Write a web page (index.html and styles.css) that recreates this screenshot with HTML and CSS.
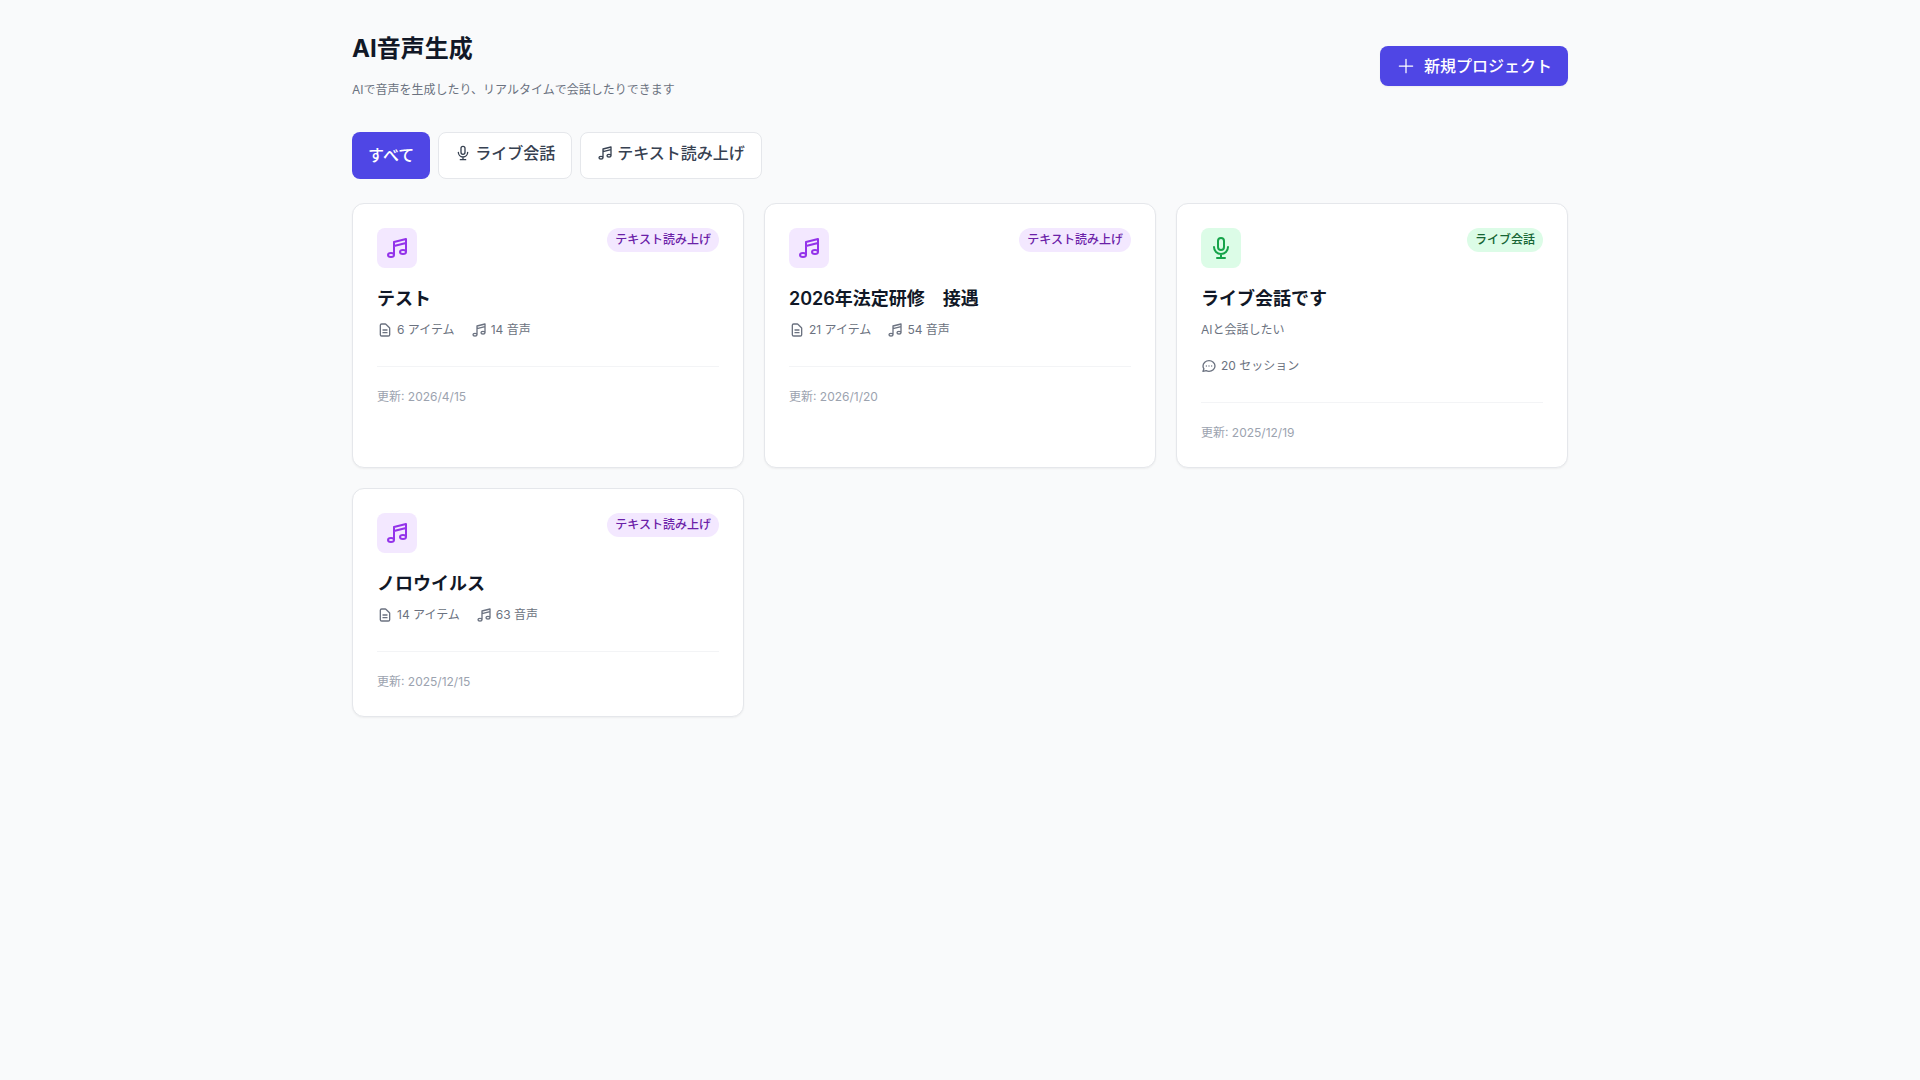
FILE: index.html
```html
<!DOCTYPE html>
<html lang="ja">
<head>
    <meta charset="UTF-8">
    <meta name="viewport" content="width=device-width, initial-scale=1">
    <title>AI音声生成</title>
    <link rel="stylesheet" href="styles.css">
</head>
<body>
    <svg class="sprite" aria-hidden="true">
        <symbol id="icon-plus" viewBox="0 0 24 24">
            <path stroke-width="1.5" d="M12 4v16m8-8H4"/>
        </symbol>
        <symbol id="icon-mic" viewBox="0 0 24 24">
            <path d="M19 11a7 7 0 01-7 7m0 0a7 7 0 01-7-7m7 7v4m0 0H8m4 0h4m-4-8a3 3 0 01-3-3V5a3 3 0 116 0v6a3 3 0 01-3 3z"/>
        </symbol>
        <symbol id="icon-music" viewBox="0 0 24 24">
            <path d="M9 19V6l12-3v13M9 19c0 1.105-1.343 2-3 2s-3-.895-3-2 1.343-2 3-2 3 .895 3 2zm12-3c0 1.105-1.343 2-3 2s-3-.895-3-2 1.343-2 3-2 3 .895 3 2zM9 10l12-3"/>
        </symbol>
        <symbol id="icon-document" viewBox="0 0 24 24">
            <path d="M9 12h6m-6 4h6m2 5H7a2 2 0 01-2-2V5a2 2 0 012-2h5.586a1 1 0 01.707.293l5.414 5.414a1 1 0 01.293.707V19a2 2 0 01-2 2z"/>
        </symbol>
        <symbol id="icon-chat" viewBox="0 0 24 24">
            <path d="M8 12h.01M12 12h.01M16 12h.01M21 12c0 4.418-4.03 8-9 8a9.863 9.863 0 01-4.255-.949L3 20l1.395-3.72C3.512 15.042 3 13.574 3 12c0-4.418 4.03-8 9-8s9 3.582 9 8z"/>
        </symbol>
    </svg>

    <main class="container">
        <header class="page-header">
            <div>
                <h1>AI音声生成</h1>
                <p class="lead">AIで音声を生成したり、リアルタイムで会話したりできます</p>
            </div>
            <button type="button" class="btn-new">
                <svg class="icon-md"><use href="#icon-plus"/></svg>
                新規プロジェクト
            </button>
        </header>

        <div class="filters">
            <button type="button" class="filter active">すべて</button>
            <button type="button" class="filter with-icon">
                <svg class="icon-sm"><use href="#icon-mic"/></svg>
                ライブ会話
            </button>
            <button type="button" class="filter with-icon">
                <svg class="icon-sm"><use href="#icon-music"/></svg>
                テキスト読み上げ
            </button>
        </div>

        <div class="grid">
            <article class="card tts">
                <div class="card-top">
                    <div class="card-icon"><svg class="icon-lg"><use href="#icon-music"/></svg></div>
                    <span class="badge">テキスト読み上げ</span>
                </div>
                <h2>テスト</h2>
                <div class="stats">
                    <span class="stat"><svg class="icon-sm"><use href="#icon-document"/></svg>6 アイテム</span>
                    <span class="stat"><svg class="icon-sm"><use href="#icon-music"/></svg>14 音声</span>
                </div>
                <p class="updated">更新: 2026/4/15</p>
            </article>

            <article class="card tts">
                <div class="card-top">
                    <div class="card-icon"><svg class="icon-lg"><use href="#icon-music"/></svg></div>
                    <span class="badge">テキスト読み上げ</span>
                </div>
                <h2>2026年法定研修　接遇</h2>
                <div class="stats">
                    <span class="stat"><svg class="icon-sm"><use href="#icon-document"/></svg>21 アイテム</span>
                    <span class="stat"><svg class="icon-sm"><use href="#icon-music"/></svg>54 音声</span>
                </div>
                <p class="updated">更新: 2026/1/20</p>
            </article>

            <article class="card live">
                <div class="card-top">
                    <div class="card-icon"><svg class="icon-lg"><use href="#icon-mic"/></svg></div>
                    <span class="badge">ライブ会話</span>
                </div>
                <h2>ライブ会話です</h2>
                <p class="description">AIと会話したい</p>
                <div class="stats">
                    <span class="stat"><svg class="icon-sm"><use href="#icon-chat"/></svg>20 セッション</span>
                </div>
                <p class="updated">更新: 2025/12/19</p>
            </article>

            <article class="card tts">
                <div class="card-top">
                    <div class="card-icon"><svg class="icon-lg"><use href="#icon-music"/></svg></div>
                    <span class="badge">テキスト読み上げ</span>
                </div>
                <h2>ノロウイルス</h2>
                <div class="stats">
                    <span class="stat"><svg class="icon-sm"><use href="#icon-document"/></svg>14 アイテム</span>
                    <span class="stat"><svg class="icon-sm"><use href="#icon-music"/></svg>63 音声</span>
                </div>
                <p class="updated">更新: 2025/12/15</p>
            </article>
        </div>
    </main>
</body>
</html>
```

FILE: styles.css
```css
* {
    box-sizing: border-box;
}

body {
    margin: 0;
    background: #f9fafb;
    color: #111827;
    font-family: Inter, "Noto Sans CJK JP", sans-serif;
    font-size: 16px;
    line-height: 24px;
}

h1, h2, p {
    margin: 0;
}

button {
    font: inherit;
    font-weight: 500;
    cursor: pointer;
}

svg {
    flex-shrink: 0;
    fill: none;
    stroke: currentColor;
    stroke-width: 2;
    stroke-linecap: round;
    stroke-linejoin: round;
}

.sprite {
    display: none;
}

.icon-sm {
    width: 16px;
    height: 16px;
}

.icon-md {
    width: 20px;
    height: 20px;
}

.icon-lg {
    width: 24px;
    height: 24px;
}

.container {
    max-width: 1280px;
    margin: 0 auto;
    padding: 32px;
}

/* header */
.page-header {
    display: flex;
    align-items: center;
    justify-content: space-between;
    margin-bottom: 32px;
}

h1 {
    font-size: 24px;
    font-weight: 700;
    line-height: 34px;
}

.lead {
    margin-top: 14px;
    color: #6b7280;
    font-size: 12px;
    line-height: 20px;
}

.btn-new {
    display: flex;
    align-items: center;
    gap: 8px;
    padding: 8px 16px;
    border: 0;
    border-radius: 8px;
    background: #4f46e5;
    color: #fff;
    box-shadow: 0 1px 2px rgba(0, 0, 0, 0.05);
}

/* filters */
.filters {
    display: flex;
    gap: 8px;
    margin-bottom: 24px;
}

.filter {
    display: flex;
    align-items: center;
    gap: 4px;
    padding: 8px 16px;
    border: 1px solid #e5e7eb;
    border-radius: 8px;
    background: #fff;
    color: #374151;
}

.filter.with-icon {
    padding-bottom: 13px;
}

.filter.active {
    padding-bottom: 10px;
    border: 0;
    background: #4f46e5;
    color: #fff;
}

/* project cards */
.grid {
    display: grid;
    grid-template-columns: repeat(3, 1fr);
    gap: 20px;
}

.card {
    padding: 24px;
    border: 1px solid #e5e7eb;
    border-radius: 12px;
    background: #fff;
    box-shadow: 0 1px 2px rgba(0, 0, 0, 0.05);
}

.card-top {
    display: flex;
    align-items: flex-start;
    justify-content: space-between;
    margin-bottom: 16px;
}

.card-icon {
    display: flex;
    align-items: center;
    justify-content: center;
    width: 40px;
    height: 40px;
    border-radius: 8px;
}

.badge {
    padding: 4px 8px;
    border-radius: 12px;
    font-size: 12px;
    font-weight: 500;
    line-height: 16px;
}

.tts .card-icon {
    background: #f3e8ff;
    color: #9333ea;
}

.tts .badge {
    background: #f3e8ff;
    color: #6b21a8;
}

.live .card-icon {
    background: #dcfce7;
    color: #16a34a;
}

.live .badge {
    background: #dcfce7;
    color: #166534;
}

.card h2 {
    margin-bottom: 6px;
    font-size: 18px;
    font-weight: 600;
    line-height: 30px;
}

.description {
    margin-bottom: 16px;
    color: #6b7280;
    font-size: 12px;
    line-height: 20px;
}

.stats {
    display: flex;
    gap: 16px;
    margin-bottom: 26px;
    color: #6b7280;
    font-size: 12px;
    line-height: 20px;
}

.stat {
    display: flex;
    align-items: center;
    gap: 4px;
}

.updated {
    padding-top: 20px;
    border-top: 1px solid #f3f4f6;
    color: #9ca3af;
    font-size: 12px;
    line-height: 20px;
}

@media (max-width: 1023px) {
    .grid {
        grid-template-columns: repeat(2, 1fr);
    }
}

@media (max-width: 639px) {
    .grid {
        grid-template-columns: 1fr;
    }

    .page-header,
    .filters {
        flex-wrap: wrap;
    }
}
```
